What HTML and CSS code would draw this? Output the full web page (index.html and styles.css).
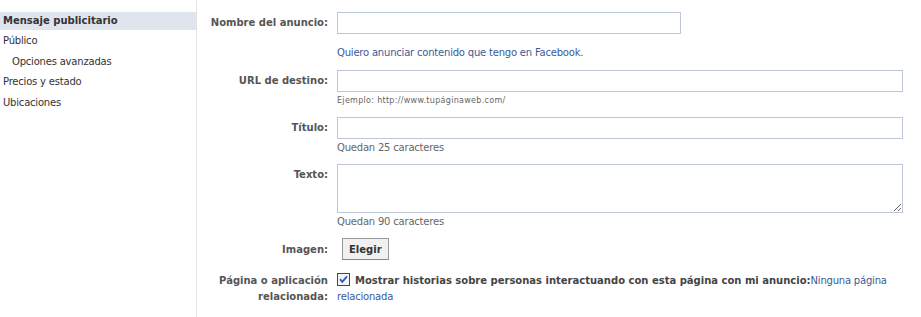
FILE: index.html
```html
<!DOCTYPE html>
<html lang="es">
<head>
    <meta charset="UTF-8">
    <meta name="viewport" content="width=device-width, initial-scale=1.0">
    <title>Crear anuncio</title>
    <link rel="stylesheet" href="styles.css">
</head>
<body>
    <div class="page">
        <ul class="side-nav">
            <li class="nav-item selected">Mensaje publicitario</li>
            <li class="nav-item">Público</li>
            <li class="nav-item sub">Opciones avanzadas</li>
            <li class="nav-item">Precios y estado</li>
            <li class="nav-item">Ubicaciones</li>
        </ul>

        <div class="ad-form">
            <div class="form-row row-name">
                <label class="field-label" for="name">Nombre del anuncio:</label>
                <div class="field">
                    <input type="text" id="name" class="text-input short">
                    <a class="hint-link" href="#">Quiero anunciar contenido que tengo en Facebook.</a>
                </div>
            </div>

            <div class="form-row row-url">
                <label class="field-label" for="url">URL de destino:</label>
                <div class="field">
                    <input type="text" id="url" class="text-input">
                    <div class="example">Ejemplo: http://www.tupáginaweb.com/</div>
                </div>
            </div>

            <div class="form-row row-title">
                <label class="field-label" for="title">Título:</label>
                <div class="field">
                    <input type="text" id="title" class="text-input">
                    <div class="counter">Quedan 25 caracteres</div>
                </div>
            </div>

            <div class="form-row row-body">
                <label class="field-label" for="body">Texto:</label>
                <div class="field">
                    <textarea id="body" class="text-area"></textarea>
                    <div class="counter">Quedan 90 caracteres</div>
                </div>
            </div>

            <div class="form-row row-image">
                <label class="field-label">Imagen:</label>
                <div class="field">
                    <button class="choose-btn">Elegir</button>
                </div>
            </div>

            <div class="form-row row-page">
                <label class="field-label">Página o aplicación relacionada:</label>
                <div class="field page-field">
                    <span class="check-box">
                        <svg width="13" height="13" viewBox="0 0 13 13">
                            <rect x="0.5" y="0.5" width="12" height="12" fill="#f4f4f0" stroke="#1c5180"/>
                            <path d="M3 6.2 L5.3 8.8 L10 3.4" fill="none" stroke="#2f57c4" stroke-width="1.8"/>
                        </svg>
                    </span><b class="check-text">Mostrar historias sobre personas interactuando con esta página con mi anuncio:</b><a class="hint-link inline" href="#">Ninguna página relacionada</a>
                </div>
            </div>
        </div>
    </div>
</body>
</html>
```

FILE: styles.css
```css
body {
    margin: 0;
    font-family: 'DejaVu Sans', Verdana, sans-serif;
    font-size: 10px;
    letter-spacing: -0.2px;
    color: #333;
    background: #fff;
}
b, .field-label, .nav-item.selected, .choose-btn {
    letter-spacing: 0;
}
.page {
    display: flex;
    min-height: 317px;
}
.side-nav {
    list-style: none;
    margin: 0;
    padding: 11px 0 0;
    width: 196px;
    flex-shrink: 0;
    border-right: 1px solid #e2e2e2;
}
.nav-item {
    padding: 0 3px;
    line-height: 20.5px;
    height: 20.5px;
    color: #333;
}
.nav-item.selected {
    font-weight: bold;
    background: #e0e4ec;
    margin-top: 1px;
    line-height: 18px;
    height: 18px;
    margin-bottom: 1px;
}
.nav-item.sub {
    padding-left: 12px;
}
.ad-form {
    padding-top: 12px;
}
.form-row {
    display: grid;
    grid-template-columns: 131px 1fr;
    column-gap: 9px;
}
.field-label {
    text-align: right;
    font-weight: bold;
    color: #555;
    padding-top: 4px;
    line-height: 14px;
}
.field {
    display: flex;
    flex-direction: column;
    align-items: flex-start;
}
.text-input {
    box-sizing: border-box;
    width: 566px;
    height: 22px;
    border: 1px solid #bdc7d8;
    margin: 0;
    padding: 3px;
    font: inherit;
}
.text-input.short {
    width: 344px;
}
.text-area {
    box-sizing: border-box;
    width: 566px;
    height: 49px;
    border: 1px solid #bdc7d8;
    margin: 0;
    padding: 3px;
    font: inherit;
}
.hint-link {
    color: #3b5998;
    text-decoration: none;
}
.row-name .hint-link {
    margin-top: 12px;
    line-height: 14px;
}
.row-url {
    margin-top: 10px;
}
.example {
    font-size: 8px;
    letter-spacing: 0.3px;
    line-height: 12px;
    margin-top: 3px;
    color: #666;
}
.row-title {
    margin-top: 10px;
}
.counter {
    color: #666;
    line-height: 14px;
    margin-top: 2px;
}
.row-body {
    margin-top: 9px;
}
.row-image {
    margin-top: 9px;
}
.row-image .field-label {
    padding-top: 5px;
}
.choose-btn {
    margin-left: 5px;
    height: 22px;
    padding: 0 6px;
    border: 1px solid #999;
    border-bottom-color: #888;
    background: #f0f0f0;
    font: inherit;
    font-weight: bold;
    color: #333;
}
.row-page {
    margin-top: 13px;
}
.row-page .field-label {
    padding-top: 0;
    line-height: 16px;
}
.page-field {
    display: block;
    line-height: 16px;
    padding-right: 20px;
}
.check-box {
    display: inline-block;
    vertical-align: -2px;
    margin-right: 5px;
    line-height: 0;
}
.check-text {
    color: #444;
}
```
